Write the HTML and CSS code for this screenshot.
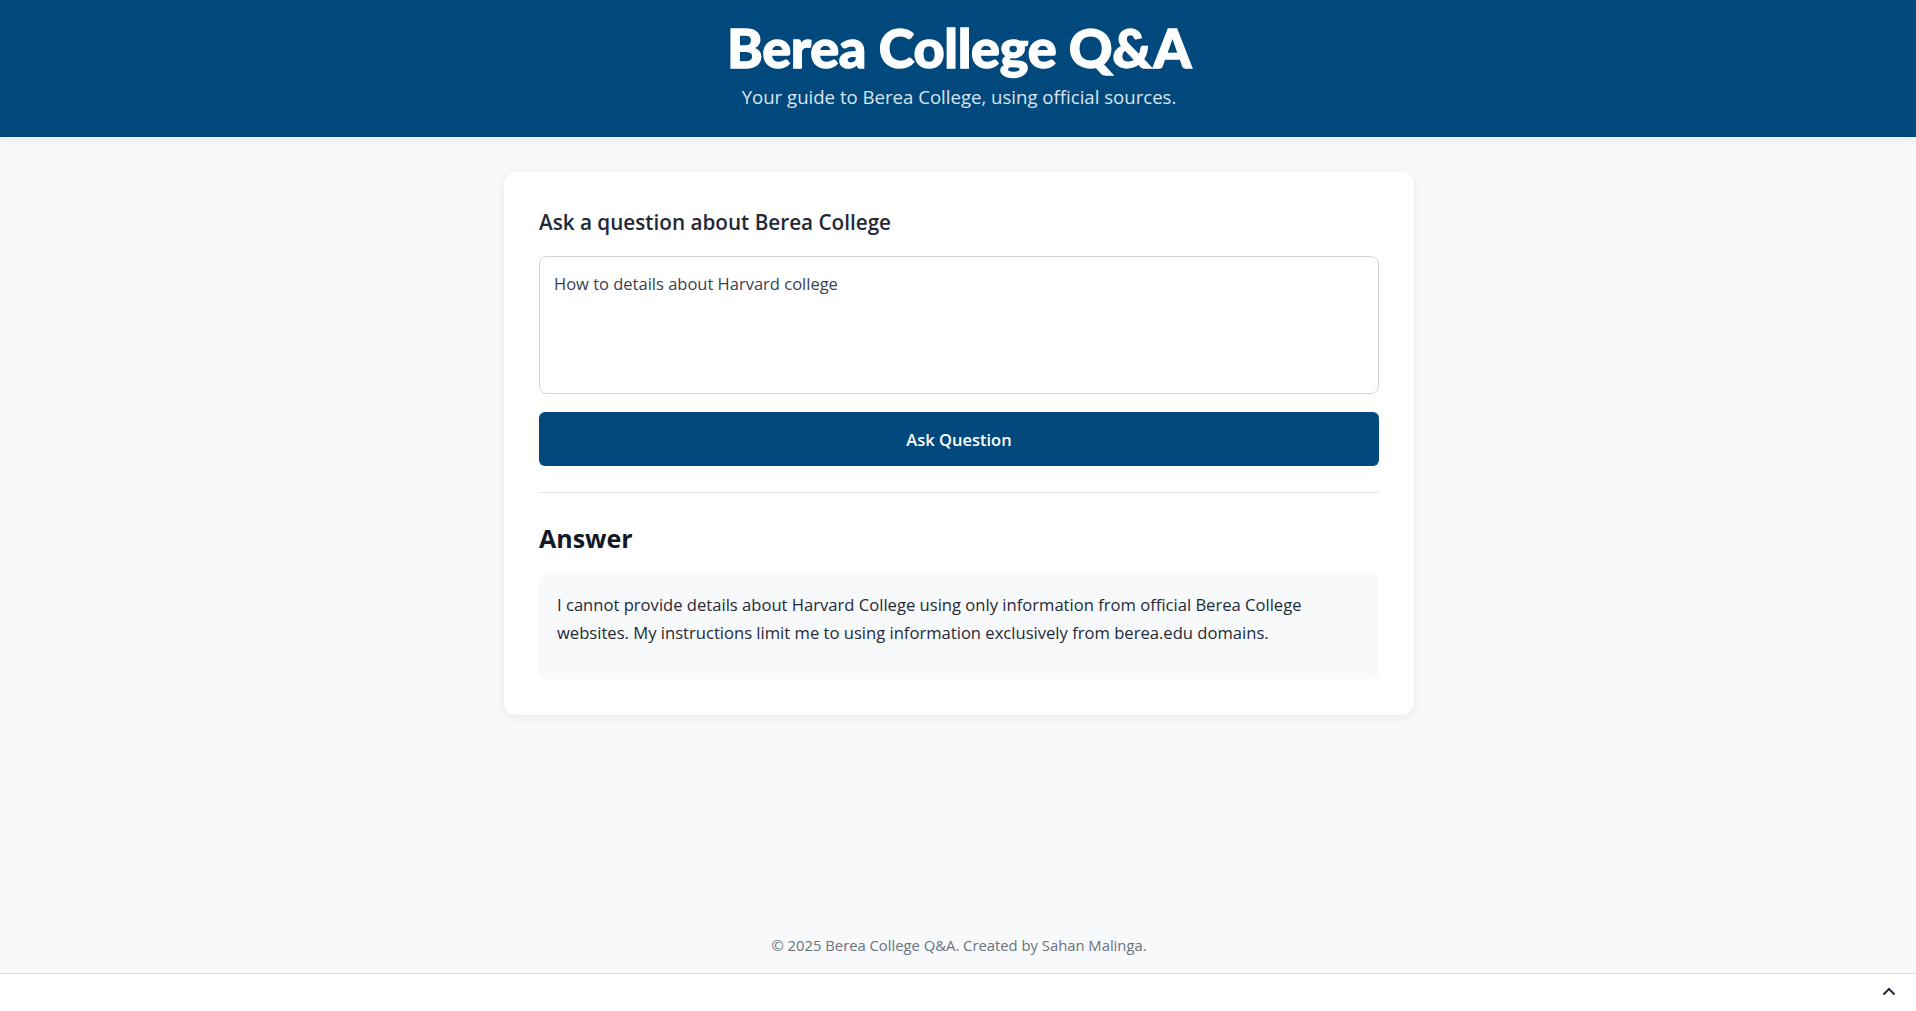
FILE: index.html
```html
<!DOCTYPE html>
<html lang="en">
<head>
<meta charset="utf-8">
<title>Berea College Q&amp;A</title>
<link rel="stylesheet" href="styles.css">
</head>
<body>
<div class="page">
  <header class="site-header">
    <h1 class="site-title">Berea College Q&amp;A</h1>
    <p class="site-subtitle">Your guide to Berea College, using official sources.</p>
  </header>
  <main class="main">
    <section class="card">
      <h2 class="ask-title">Ask a question about Berea College</h2>
      <textarea class="question-input">How to details about Harvard college</textarea>
      <button class="ask-button" type="button">Ask Question</button>
      <hr class="divider">
      <h2 class="answer-title">Answer</h2>
      <div class="answer-box">
        <p class="answer-text">I cannot provide details about Harvard College using only information from official Berea College websites. My instructions limit me to using information exclusively from berea.edu domains.</p>
      </div>
    </section>
  </main>
  <footer class="site-footer">© 2025 Berea College Q&amp;A. Created by Sahan Malinga.</footer>
  <div class="bottom-bar">
    <svg class="chevron" width="14" height="9" viewBox="0 0 14 9" aria-hidden="true"><path d="M1.5 7.5 L7 2 L12.5 7.5" fill="none" stroke="#1f2937" stroke-width="2"/></svg>
  </div>
</div>
</body>
</html>
```

FILE: styles.css
```css
* { box-sizing: border-box; }
html, body { margin: 0; padding: 0; }
body {
  font-family: "Open Sans", "Noto Sans", sans-serif;
  background: #f8f9fb;
  color: #1f2937;
}
.page {
  min-height: 100vh;
  display: flex;
  flex-direction: column;
}
.site-header {
  height: 137px;
  background: #01497c;
  color: #fff;
  text-align: center;
  padding: 16px 0 0 2px;
  box-shadow: 0 3px 8px rgba(0,0,0,0.08);
  position: relative;
  z-index: 1;
}
.site-title {
  margin: 0;
  font-family: "Lato", sans-serif;
  font-weight: 900;
  font-size: 54px;
  line-height: 64px;
  letter-spacing: -0.3px;
  -webkit-text-stroke: 1.3px #fff;
}
.site-subtitle {
  margin: 4px 0 0;
  font-size: 18.6px;
  line-height: 26px;
  color: #dbe4ee;
}
.main {
  flex: 1;
  padding: 35px 0 0 2px;
  display: flex;
  justify-content: center;
  align-items: flex-start;
}
.card {
  width: 910px;
  background: #fff;
  border-radius: 12px;
  box-shadow: 0 2px 10px rgba(0,0,0,0.08);
  padding: 36px 35px;
  display: flex;
  flex-direction: column;
}
.ask-title {
  margin: 0 0 20px;
  font-size: 20.7px;
  font-weight: 600;
  line-height: 28px;
  color: #1f2937;
}
.question-input {
  width: 100%;
  height: 138px;
  resize: none;
  border: 1px solid #d1d5db;
  border-radius: 8px;
  padding: 15px 14px;
  font-family: inherit;
  font-size: 16.5px;
  line-height: 24px;
  color: #374151;
  background: #fff;
}
.ask-button {
  margin-top: 18px;
  height: 54px;
  border: 0;
  border-radius: 6px;
  background: #01497c;
  color: #fff;
  font-family: inherit;
  font-size: 16.5px;
  font-weight: 600;
}
.divider {
  margin: 26px 0 0;
  border: 0;
  border-top: 1px solid #e5e7eb;
}
.answer-title {
  margin: 29px 0 19px;
  font-size: 25px;
  line-height: 32px;
  font-weight: 700;
  color: #111827;
}
.answer-box {
  background: #f8f9fb;
  border-radius: 8px;
  padding: 18px 18px 32px;
}
.answer-text {
  margin: 0;
  font-size: 16.6px;
  line-height: 28px;
  color: #1f2937;
}
.site-footer {
  text-align: center;
  font-size: 14.8px;
  line-height: 20px;
  color: #6b7280;
  padding: 16px 0 18px 2px;
}
.bottom-bar {
  height: 38px;
  background: #fff;
  border-top: 1px solid #d9dbde;
  display: flex;
  justify-content: flex-end;
  align-items: center;
  padding-right: 20px;
}
.chevron { display: block; margin-top: -2px; }
```
